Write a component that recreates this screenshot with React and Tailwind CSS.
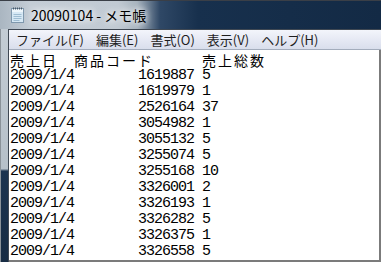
const rows = [
  ["1619887", "5"],
  ["1619979", "1"],
  ["2526164", "37"],
  ["3054982", "1"],
  ["3055132", "5"],
  ["3255074", "5"],
  ["3255168", "10"],
  ["3326001", "2"],
  ["3326193", "1"],
  ["3326282", "5"],
  ["3326375", "1"],
  ["3326558", "5"],
];

const menus = ["ファイル(F)", "編集(E)", "書式(O)", "表示(V)", "ヘルプ(H)"];

function NotepadIcon() {
  return (
    <svg width="13" height="16" viewBox="0 0 13 16">
      <rect x="0.5" y="1.5" width="12" height="14" fill="#d6e8f4" stroke="#7f98ad" />
      <rect x="1" y="2" width="11" height="3" fill="#eef6fb" />
      <path d="M2.5 7.5h8M2.5 9.5h8M2.5 11.5h8M2.5 13.5h6" stroke="#9fbdd2" strokeWidth="1" />
      <path d="M2.5 0.5v2M4.5 0.5v2M6.5 0.5v2M8.5 0.5v2M10.5 0.5v2" stroke="#4a5866" strokeWidth="1" />
    </svg>
  );
}

export default function App() {
  return (
    <div className="flex h-[262px] w-[381px] flex-col overflow-hidden bg-[#132a45]">
      {/* title bar */}
      <div className="flex h-[29px] shrink-0 items-center border-t border-[#3a3f47] bg-[linear-gradient(to_right,#aab6c1_0%,#c4cdd6_8%,#c1cad3_31%,#a7b3be_36%,#2f4866_42%,#17304d_52%,#132a45_100%)] pl-[11px]">
        <NotepadIcon />
        <span className="ml-[7px] font-['Noto_Sans_CJK_JP',sans-serif] text-[14px] leading-none text-black [text-shadow:0_0_6px_#fff,0_0_10px_#fff]">
          20090104 - メモ帳
        </span>
      </div>

      <div className="flex min-h-0 flex-1">
        {/* left frame */}
        <div className="w-[8px] shrink-0 border-l border-[#8a9299] bg-[linear-gradient(to_bottom,#c3ccd4_0%,#b6c0c9_60%,#1c3450_61%,#172c44_100%)]" />

        <div className="flex min-w-0 flex-1 flex-col border-l border-t border-[#3f4853]">
          {/* menu bar */}
          <div className="flex h-[20px] shrink-0 items-center gap-[12px] border-b border-[#a3acbc] bg-[linear-gradient(to_bottom,#f3f5fb,#e6e9f4_50%,#d9deec)] pl-[7px] font-['Noto_Sans_CJK_JP',sans-serif] text-[13px] text-[#1e1e1e]">
            {menus.map((m) => (
              <span key={m} className="leading-none">
                {m}
              </span>
            ))}
          </div>

          {/* text area */}
          <div className="min-h-0 flex-1 border-b-2 border-r-2 border-[#7b7b7b] bg-white pl-[1px] pt-[2px] text-black">
            <div className="flex h-[16px] items-center font-['Noto_Sans_CJK_JP',sans-serif] text-[14px] leading-[16px] tracking-[2px]">
              <span className="w-[64px] shrink-0">売上日</span>
              <span className="w-[128px] shrink-0">商品コード</span>
              <span>売上総数</span>
            </div>
            {rows.map(([code, qty]) => (
              <div
                key={code}
                className="flex h-[16px] items-center font-['Liberation_Mono',monospace] text-[15px] leading-[16px] tracking-[-1px]"
              >
                <span className="w-[128px] shrink-0">2009/1/4</span>
                <span className="w-[64px] shrink-0">{code}</span>
                <span>{qty}</span>
              </div>
            ))}
          </div>
        </div>
      </div>
    </div>
  );
}
